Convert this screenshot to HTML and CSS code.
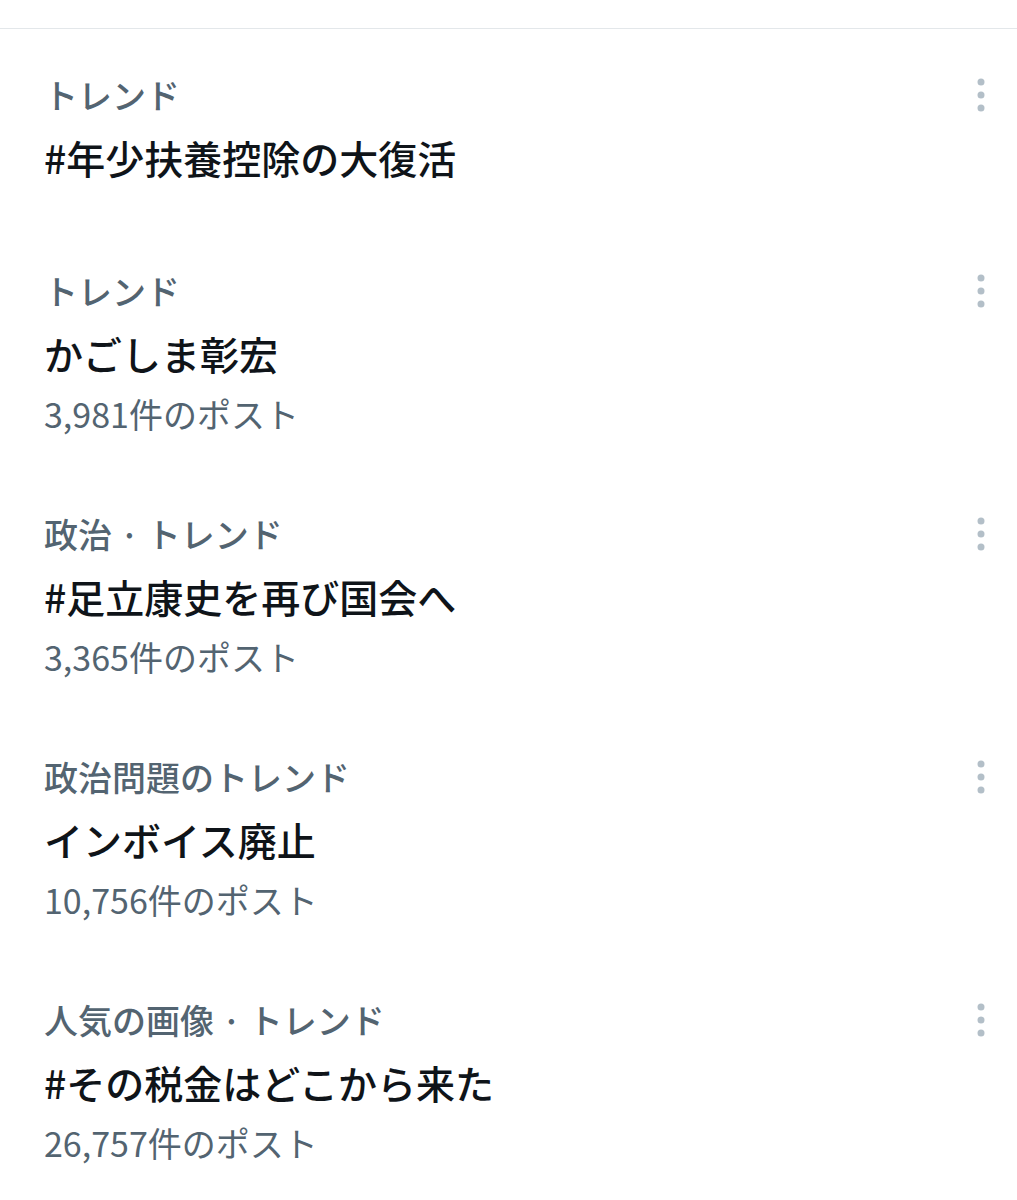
FILE: index.html
```html
<!DOCTYPE html>
<html lang="ja">
<head>
<meta charset="utf-8">
<title>トレンド</title>
<link rel="stylesheet" href="styles.css">
</head>
<body>
<div class="topbar"></div>
<ul class="trends">
  <li class="trend no-count">
    <div class="trend-body">
      <div class="label">トレンド</div>
      <div class="title">#年少扶養控除の大復活</div>
    </div>
    <button class="more" aria-label="その他"><svg width="8" height="34" viewBox="0 0 8 34"><circle cx="4" cy="4" r="3.5"/><circle cx="4" cy="17" r="3.5"/><circle cx="4" cy="30" r="3.5"/></svg></button>
  </li>
  <li class="trend">
    <div class="trend-body">
      <div class="label">トレンド</div>
      <div class="title">かごしま彰宏</div>
      <div class="count">3,981件のポスト</div>
    </div>
    <button class="more" aria-label="その他"><svg width="8" height="34" viewBox="0 0 8 34"><circle cx="4" cy="4" r="3.5"/><circle cx="4" cy="17" r="3.5"/><circle cx="4" cy="30" r="3.5"/></svg></button>
  </li>
  <li class="trend">
    <div class="trend-body">
      <div class="label">政治 · トレンド</div>
      <div class="title">#足立康史を再び国会へ</div>
      <div class="count">3,365件のポスト</div>
    </div>
    <button class="more" aria-label="その他"><svg width="8" height="34" viewBox="0 0 8 34"><circle cx="4" cy="4" r="3.5"/><circle cx="4" cy="17" r="3.5"/><circle cx="4" cy="30" r="3.5"/></svg></button>
  </li>
  <li class="trend">
    <div class="trend-body">
      <div class="label">政治問題のトレンド</div>
      <div class="title">インボイス廃止</div>
      <div class="count">10,756件のポスト</div>
    </div>
    <button class="more" aria-label="その他"><svg width="8" height="34" viewBox="0 0 8 34"><circle cx="4" cy="4" r="3.5"/><circle cx="4" cy="17" r="3.5"/><circle cx="4" cy="30" r="3.5"/></svg></button>
  </li>
  <li class="trend">
    <div class="trend-body">
      <div class="label">人気の画像 · トレンド</div>
      <div class="title">#その税金はどこから来た</div>
      <div class="count">26,757件のポスト</div>
    </div>
    <button class="more" aria-label="その他"><svg width="8" height="34" viewBox="0 0 8 34"><circle cx="4" cy="4" r="3.5"/><circle cx="4" cy="17" r="3.5"/><circle cx="4" cy="30" r="3.5"/></svg></button>
  </li>
</ul>
</body>
</html>
```

FILE: styles.css
```css
html, body {
  margin: 0;
  padding: 0;
  background: #ffffff;
}

body {
  font-family: "Noto Sans CJK JP", "Noto Sans", sans-serif;
  color: #0f1419;
}

.topbar {
  height: 28px;
  border-bottom: 1px solid #e3e7ea;
}

.trends {
  list-style: none;
  margin: 0;
  padding: 6px 0 0 0;
}

.trend {
  display: flex;
  align-items: flex-start;
  padding: 29px 16px 30px 44px;
}

.trend.no-count {
  padding-bottom: 43px;
}

.trend-body {
  flex: 1;
  min-width: 0;
}

.label {
  font-size: 34px;
  line-height: 62px;
  color: #536471;
  font-weight: 500;
}

.title {
  font-size: 39px;
  line-height: 62px;
  font-weight: 500;
  color: #0f1419;
}

.count {
  font-size: 34px;
  line-height: 60px;
  color: #536471;
}

.more {
  width: 40px;
  height: 62px;
  display: flex;
  align-items: center;
  justify-content: center;
  padding: 0;
  border: 0;
  background: transparent;
}

.more svg {
  display: block;
  fill: #b3bfc8;
}
```
